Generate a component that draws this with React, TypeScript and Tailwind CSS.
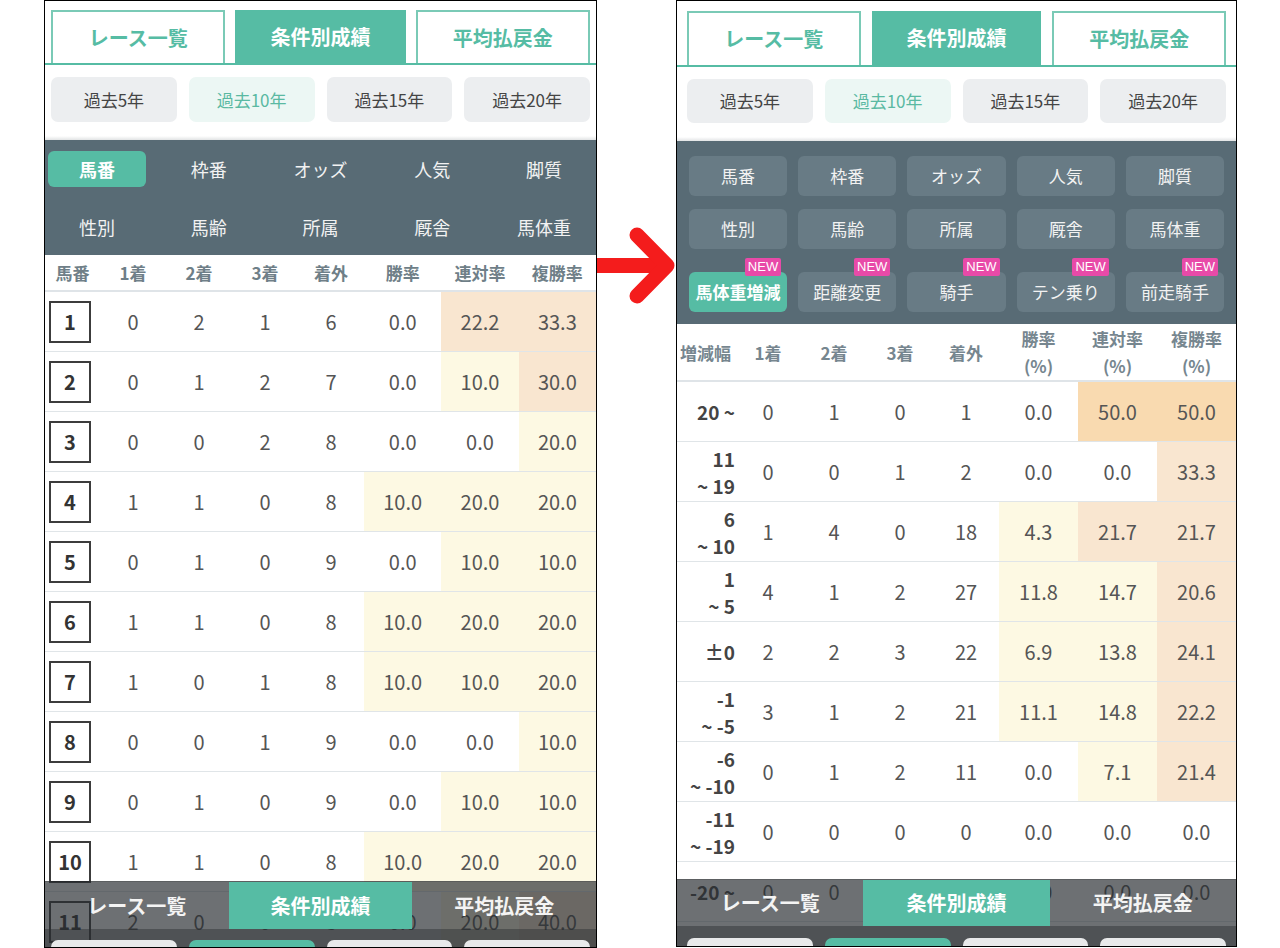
import React from "react";

const HL: Record<string, string> = {
  y: "bg-[#fdf9e3]",
  p: "bg-[#f9e6d0]",
  o: "bg-[#f9dab0]",
};

// "value" or "value:level"
function splitCell(c: string) {
  const [v, lv] = c.split(":");
  return { v, bg: lv ? HL[lv] : "" };
}

const TABS = ["レース一覧", "条件別成績", "平均払戻金"];
const PERIODS = ["過去5年", "過去10年", "過去15年", "過去20年"];
const FILTERS = ["馬番", "枠番", "オッズ", "人気", "脚質", "性別", "馬齢", "所属", "厩舎", "馬体重"];
const NEW_FILTERS = ["馬体重増減", "距離変更", "騎手", "テン乗り", "前走騎手"];

const leftRows: string[][] = [
  ["1", "0", "2", "1", "6", "0.0", "22.2:p", "33.3:p"],
  ["2", "0", "1", "2", "7", "0.0", "10.0:y", "30.0:p"],
  ["3", "0", "0", "2", "8", "0.0", "0.0", "20.0:y"],
  ["4", "1", "1", "0", "8", "10.0:y", "20.0:y", "20.0:y"],
  ["5", "0", "1", "0", "9", "0.0", "10.0:y", "10.0:y"],
  ["6", "1", "1", "0", "8", "10.0:y", "20.0:y", "20.0:y"],
  ["7", "1", "0", "1", "8", "10.0:y", "10.0:y", "20.0:y"],
  ["8", "0", "0", "1", "9", "0.0", "0.0", "10.0:y"],
  ["9", "0", "1", "0", "9", "0.0", "10.0:y", "10.0:y"],
  ["10", "1", "1", "0", "8", "10.0:y", "20.0:y", "20.0:y"],
  ["11", "2", "0", "0", "8", "0.0", "20.0:y", "40.0:p"],
];

const rightRows: { label: string[]; cells: string[] }[] = [
  { label: ["20 ~"], cells: ["0", "1", "0", "1", "0.0", "50.0:o", "50.0:o"] },
  { label: ["11", "~ 19"], cells: ["0", "0", "1", "2", "0.0", "0.0", "33.3:p"] },
  { label: ["6", "~ 10"], cells: ["1", "4", "0", "18", "4.3:y", "21.7:p", "21.7:p"] },
  { label: ["1", "~ 5"], cells: ["4", "1", "2", "27", "11.8:y", "14.7:y", "20.6:p"] },
  { label: ["±0"], cells: ["2", "2", "3", "22", "6.9:y", "13.8:y", "24.1:p"] },
  { label: ["-1", "~ -5"], cells: ["3", "1", "2", "21", "11.1:y", "14.8:y", "22.2:p"] },
  { label: ["-6", "~ -10"], cells: ["0", "1", "2", "11", "0.0", "7.1:y", "21.4:p"] },
  { label: ["-11", "~ -19"], cells: ["0", "0", "0", "0", "0.0", "0.0", "0.0"] },
  { label: ["-20 ~"], cells: ["0", "0", "0", "0", "0.0", "0.0", "0.0"] },
];

function TopTabs({ wrap, tab }: { wrap: string; tab: string }) {
  return (
    <div className={`flex border-b-2 border-[#56bca4] ${wrap}`}>
      {TABS.map((t, i) => (
        <div
          key={t}
          className={`flex-1 flex items-center justify-center text-[20px] font-bold ${tab} ${
            i === 1 ? "bg-[#56bca4] text-white" : "border-2 border-b-0 border-[#7acab6] bg-white text-[#56bca4]"
          }`}
        >
          {t}
        </div>
      ))}
    </div>
  );
}

function Periods({ wrap, btn }: { wrap: string; btn: string }) {
  return (
    <>
      <div className={`flex gap-[12px] ${wrap}`}>
        {PERIODS.map((t, i) => (
          <div
            key={t}
            className={`flex-1 flex items-center justify-center rounded-[7px] text-[17px] ${btn} ${
              i === 1 ? "bg-[#ecf7f4] text-[#5ab9a2]" : "bg-[#eceef0] text-[#444]"
            }`}
          >
            {t}
          </div>
        ))}
      </div>
      <div className="h-[14px]" />
      <div className="h-[4px] bg-linear-to-b from-white to-[#e2e4e5]" />
    </>
  );
}

function BottomBar({ tabH, strip, wrap }: { tabH: string; strip: string; wrap: string }) {
  return (
    <div className="absolute inset-x-0 bottom-0">
      <div className={`grid grid-cols-3 border-t border-[rgba(0,0,0,0.15)] bg-[rgba(40,44,48,0.68)] ${tabH}`}>
        {TABS.map((t, i) => (
          <div
            key={t}
            className={`flex items-center justify-center text-[20px] font-bold ${
              i === 1 ? "bg-[#56bca4] text-white" : "text-[#f4f4f4]"
            }`}
          >
            {t}
          </div>
        ))}
      </div>
      <div className={`flex items-start gap-[12px] overflow-hidden bg-[rgba(40,44,48,0.82)] ${strip} ${wrap}`}>
        {PERIODS.map((t, i) => (
          <div
            key={t}
            className={`flex-1 h-[40px] shrink-0 rounded-[7px] ${i === 1 ? "bg-[#56bca4]" : "bg-[#e8e9ea]"}`}
          />
        ))}
      </div>
    </div>
  );
}

function LeftPhone() {
  return (
    <div className="relative ml-[44px] h-[948px] w-[553px] shrink-0 overflow-hidden border border-black bg-white">
      <TopTabs wrap="pt-[9px] px-[6px] gap-[10px]" tab="h-[53px]" />
      <Periods wrap="mt-[12px] px-[6px]" btn="h-[45px]" />

      <div className="grid grid-cols-5 gap-x-[14px] gap-y-[22px] bg-[#586b75] px-[3px] pt-[11px] pb-[10px]">
        {FILTERS.map((t, i) => (
          <div
            key={t}
            className={`flex h-[36px] items-center justify-center rounded-[6px] text-[18px] ${
              i === 0 ? "bg-[#56bca4] font-bold text-white" : "text-[#f2f2f2]"
            }`}
          >
            {t}
          </div>
        ))}
      </div>

      <div className="grid h-[37px] grid-cols-[55px_repeat(4,66px)_repeat(3,1fr)] border-b-2 border-[#dfe4e8] text-[17px] font-bold text-[#6f7f88]">
        {["馬番", "1着", "2着", "3着", "着外", "勝率", "連対率", "複勝率"].map((h) => (
          <div key={h} className="flex items-center justify-center">
            {h}
          </div>
        ))}
      </div>

      {leftRows.map((r) => (
        <div
          key={r[0]}
          className="grid h-[60px] grid-cols-[55px_repeat(4,66px)_repeat(3,1fr)] border-b border-[#e0e5e8] text-[20px] text-[#555]"
        >
          <div className="flex items-center pl-[4px]">
            <div className="flex h-[42px] w-[42px] items-center justify-center border-2 border-[#3c3c3c] font-bold text-[#333]">
              {r[0]}
            </div>
          </div>
          {r.slice(1).map((c, j) => {
            const { v, bg } = splitCell(c);
            return (
              <div key={j} className={`flex items-center justify-center ${bg}`}>
                {v}
              </div>
            );
          })}
        </div>
      ))}

      <BottomBar tabH="h-[48px]" strip="h-[18px] pt-[11px]" wrap="px-[6px]" />
    </div>
  );
}

function RightPhone() {
  return (
    <div className="relative h-[947px] w-[561px] shrink-0 overflow-hidden border border-black bg-white">
      <TopTabs wrap="pt-[10px] px-[10px] gap-[11px]" tab="h-[54px]" />
      <Periods wrap="mt-[12px] px-[10px]" btn="h-[44px]" />

      <div className="bg-[#586b75] px-[12px] pt-[15px] pb-[12px]">
        <div className="grid grid-cols-5 gap-x-[11px] gap-y-[13px]">
          {FILTERS.map((t) => (
            <div
              key={t}
              className="flex h-[40px] items-center justify-center rounded-[6px] bg-[#687b85] text-[17px] text-[#f2f2f2]"
            >
              {t}
            </div>
          ))}
        </div>
        <div className="mt-[23px] grid grid-cols-5 gap-x-[11px]">
          {NEW_FILTERS.map((t, i) => (
            <div
              key={t}
              className={`relative flex h-[40px] items-center justify-center rounded-[6px] text-[17px] ${
                i === 0 ? "bg-[#56bca4] font-bold text-white" : "bg-[#687b85] text-[#f2f2f2]"
              }`}
            >
              {t}
              <span className="absolute -top-[14px] right-[6px] rounded-[2px] bg-[#e84aa8] px-[3px] font-['Liberation_Sans',sans-serif] text-[13px] leading-[18px] font-normal text-white">
                NEW
              </span>
            </div>
          ))}
        </div>
      </div>

      <div className="grid h-[58px] grid-cols-[58px_repeat(4,66px)_repeat(3,1fr)] border-b-2 border-[#dfe4e8] text-[17px] leading-[27px] font-bold text-[#76868f]">
        <div className="flex items-center pl-[3px]">増減幅</div>
        {["1着", "2着", "3着", "着外"].map((h) => (
          <div key={h} className="flex items-center justify-center">
            {h}
          </div>
        ))}
        {["勝率", "連対率", "複勝率"].map((h) => (
          <div key={h} className="flex flex-col items-center justify-center">
            <span>{h}</span>
            <span>(%)</span>
          </div>
        ))}
      </div>

      {rightRows.map((r) => (
        <div
          key={r.label.join()}
          className="grid h-[60px] grid-cols-[58px_repeat(4,66px)_repeat(3,1fr)] border-b border-[#e0e5e8] text-[20px] text-[#555]"
        >
          <div className="flex flex-col items-end justify-center text-[19px] leading-[27px] font-bold whitespace-nowrap text-[#444]">
            {r.label.map((l) => (
              <span key={l}>{l}</span>
            ))}
          </div>
          {r.cells.map((c, j) => {
            const { v, bg } = splitCell(c);
            return (
              <div key={j} className={`flex items-center justify-center ${bg}`}>
                {v}
              </div>
            );
          })}
        </div>
      ))}

      <BottomBar tabH="h-[47px]" strip="h-[20px] pt-[12px]" wrap="px-[10px]" />
    </div>
  );
}

export default function App() {
  return (
    <div className="flex h-[948px] w-[1280px] items-start overflow-hidden bg-white font-['Noto_Sans_CJK_JP',sans-serif]">
      <LeftPhone />
      <div className="w-[79px] shrink-0 pt-[215px]">
        <svg width="79" height="100" viewBox="0 0 79 100">
          <path d="M0 50.5 H68" stroke="#f41c1c" strokeWidth="15" />
          <path
            d="M40 20 L70 50.5 L40 81"
            fill="none"
            stroke="#f41c1c"
            strokeWidth="15"
            strokeLinecap="round"
            strokeLinejoin="round"
          />
        </svg>
      </div>
      <RightPhone />
    </div>
  );
}
